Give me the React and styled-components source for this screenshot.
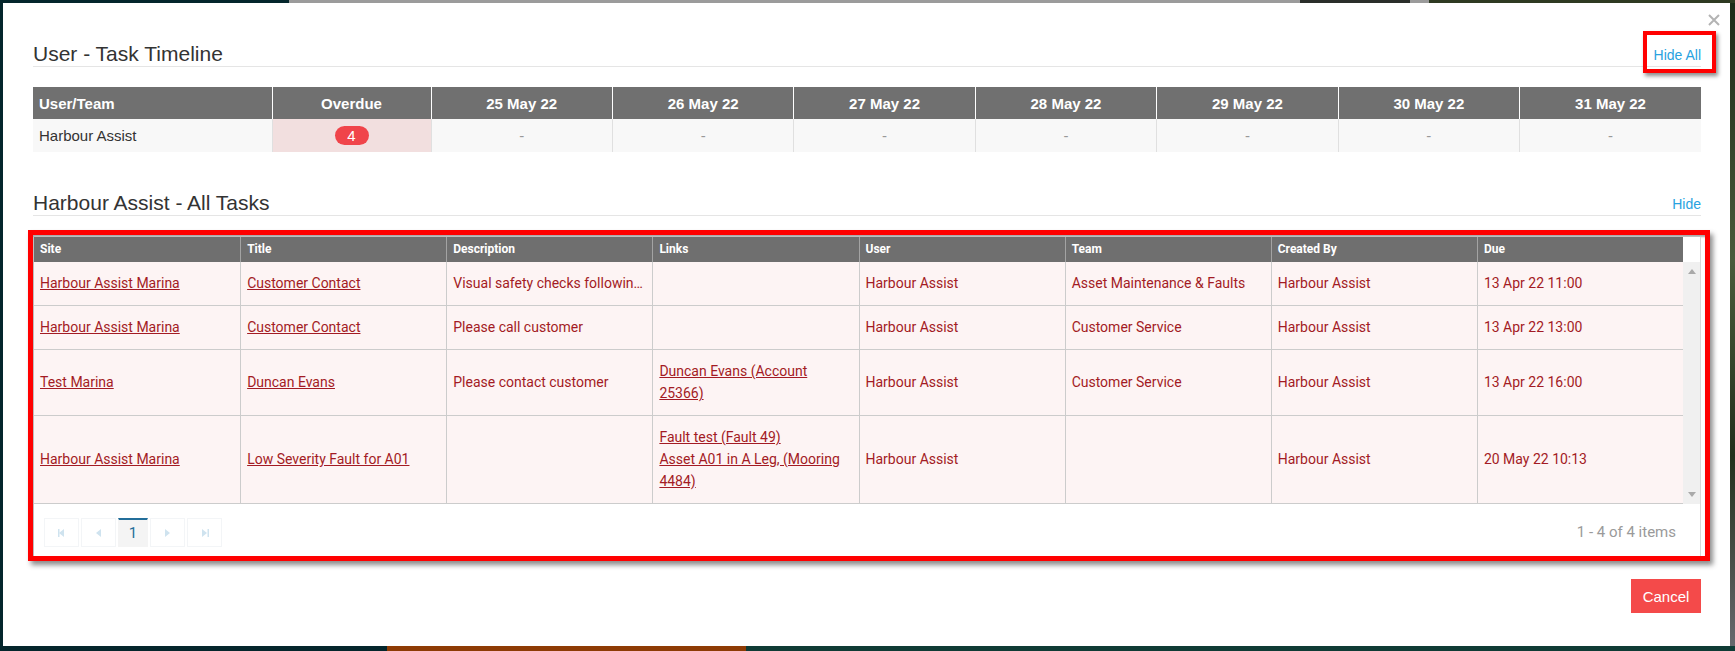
import React from "react";
import styled, { createGlobalStyle, css } from "styled-components";

const GlobalStyle = createGlobalStyle`
  html, body { margin: 0; padding: 0; }
  body { font-family: "Liberation Sans", Arial, sans-serif; }
  *, *::before, *::after { box-sizing: border-box; }
`;

const Page = styled.div`
  width: 1735px;
  height: 651px;
  padding: 3px 5px 5px 3px;
  display: flex;
  background:
    linear-gradient(to right, #04262c 0 289px, #9b9b9b 289px 1300px, #2a2f2a 1300px 1410px, #9b9b9b 1410px 1429px, #2f3a22 1429px) top / 100% 3px no-repeat,
    linear-gradient(to right, #04262c 0 387px, #8e3b05 387px 746px, #0f3b35 746px) bottom / 100% 5px no-repeat,
    linear-gradient(#1b2a18, #4a5a3a 40%, #22301c 70%, #6a6a70) right / 5px 100% no-repeat,
    #04262c;
`;

const Modal = styled.div`
  position: relative;
  width: 1727px;
  height: 643px;
  background: #fff;
  padding: 39px 29px 0 30px;
  display: flex;
  flex-direction: column;
`;

const CloseButton = styled.button`
  position: absolute;
  top: 11px;
  right: 10px;
  width: 12px;
  height: 12px;
  padding: 0;
  border: 0;
  background: transparent;
  display: flex;
  cursor: pointer;
`;

const Section = styled.section`
  display: flex;
  flex-direction: column;
  margin-top: ${(p) => p.$gap || 0}px;
`;

const SectionHeader = styled.div`
  height: 25px;
  display: flex;
  align-items: center;
  justify-content: space-between;
  border-bottom: 1px solid #e5e5e5;
`;

const SectionTitle = styled.h2`
  margin: 0;
  font-family: "Liberation Sans", Arial, sans-serif;
  font-weight: normal;
  font-size: 21px;
  line-height: 24px;
  color: #333;
`;

const LinkWrap = styled.span`
  position: relative;
  display: inline-flex;
  margin-top: 2px;
`;

const HeaderLink = styled.a`
  font-family: "Liberation Sans", Arial, sans-serif;
  font-size: 14px;
  line-height: 20px;
  color: #29a2e0;
  text-decoration: none;
  cursor: pointer;
`;

const Highlight = styled.span`
  position: absolute;
  left: -11px;
  right: -15px;
  top: -14px;
  bottom: -8px;
  border: 4px solid #ff0000;
  box-shadow: 2px 3px 4px rgba(0, 0, 0, 0.45);
  pointer-events: none;
`;

const TimelineTable = styled.table`
  margin-top: 20px;
  width: 1668px;
  table-layout: fixed;
  border-collapse: collapse;
  font-family: "Liberation Sans", Arial, sans-serif;
  font-size: 15px;
`;

const TH = styled.th`
  height: 32px;
  padding: 0 6px;
  background: #707070;
  color: #fff;
  font-weight: bold;
  text-align: ${(p) => (p.$left ? "left" : "center")};
  border-left: 1px solid #fff;
  &:first-child { border-left: 0; }
`;

const TD = styled.td`
  height: 33px;
  padding: 0 6px;
  background: ${(p) => (p.$overdue ? "#f2dfdf" : "#f8f8f8")};
  color: ${(p) => (p.$muted ? "#999" : "#333")};
  text-align: ${(p) => (p.$left ? "left" : "center")};
  border-left: 1px solid #e0e0e0;
  &:first-child { border-left: 0; }
`;

const Badge = styled.span`
  display: inline-block;
  min-width: 34px;
  height: 19px;
  line-height: 19px;
  border-radius: 10px;
  background: #f0444a;
  color: #fff;
  font-size: 15px;
  text-align: center;
`;

const HighlightFrame = styled.div`
  margin: 14px -9px 0 -5px;
  border: 5px solid #ff0000;
  box-shadow: 3px 4px 5px rgba(0, 0, 0, 0.45), inset 1px 2px 2px rgba(0, 0, 0, 0.35);
  padding-top: 2px;
  padding-right: 4px;
`;

const Grid = styled.div`
  width: 1668px;
  border-left: 1px solid #bdbdbd;
  border-right: 1px solid #d8d8d8;
  font-family: Roboto, "Liberation Sans", Arial, sans-serif;
  background: #fff;
`;

const cols = css`
  display: grid;
  grid-template-columns: repeat(8, minmax(0, 1fr));
`;

const GridHead = styled.div`
  display: grid;
  grid-template-columns: 1fr 17px;
`;

const HeadRow = styled.div`
  ${cols};
  background: #6f6f6f;
`;

const HeadCell = styled.div`
  height: 25px;
  line-height: 25px;
  padding: 0 6px;
  color: #fff;
  font-size: 12px;
  font-weight: 700;
  border-left: 1px solid #a3a3a3;
  &:first-child { border-left: 0; }
`;

const ScrollCorner = styled.div`
  background: #fff;
`;

const GridBody = styled.div`
  display: grid;
  grid-template-columns: 1fr 17px;
`;

const Rows = styled.div`
  display: flex;
  flex-direction: column;
`;

const Row = styled.div`
  ${cols};
  background: #fdf4f4;
  border-bottom: 1px solid #cccccc;
`;

const Cell = styled.div`
  min-width: 0;
  padding: 10px 6px 11px;
  display: flex;
  flex-direction: column;
  justify-content: center;
  font-size: 14px;
  line-height: 22px;
  color: #a31b24;
  border-left: 1px solid #cccccc;
  &:first-child { border-left: 0; }
`;

const Ellipsis = styled.span`
  white-space: nowrap;
  overflow: hidden;
  text-overflow: ellipsis;
`;

const CellLink = styled.a`
  color: #a31b24;
  text-decoration: underline;
  cursor: pointer;
`;

const Scrollbar = styled.div`
  background: #f0f0f0;
  display: flex;
  flex-direction: column;
  justify-content: space-between;
  align-items: center;
  padding: 7px 0 7px;
`;

const Pager = styled.div`
  height: 52px;
  padding: 14px 24px 0 10px;
  display: flex;
  align-items: flex-start;
  justify-content: space-between;
`;

const PagerButtons = styled.div`
  display: flex;
  gap: 2px;
`;

const PagerButton = styled.button`
  width: ${(p) => (p.$active ? 30 : 35)}px;
  height: 29px;
  padding: 0;
  display: flex;
  align-items: center;
  justify-content: center;
  background: ${(p) => (p.$active ? "#f4f4f4" : "#fff")};
  border: 1px solid ${(p) => (p.$active ? "#f4f4f4" : "#f3f5f7")};
  border-top: ${(p) => (p.$active ? "2px solid #236e9a" : "1px solid #f3f5f7")};
  color: #236e9a;
  font-family: Roboto, "Liberation Sans", sans-serif;
  font-size: 15px;
  cursor: pointer;
`;

const PagerInfo = styled.span`
  font-size: 15px;
  line-height: 29px;
  color: #9a9a9a;
`;

const Footer = styled.div`
  margin-top: 18px;
  display: flex;
  justify-content: flex-end;
`;

const CancelButton = styled.button`
  width: 70px;
  height: 34px;
  padding: 0;
  border: 0;
  background: #f44a4a;
  color: #fff;
  font-family: "Liberation Sans", Arial, sans-serif;
  font-size: 15px;
  cursor: pointer;
`;

const Tri = ({ dir, color = "#cfe3ef", bar }) => {
  const vertical = dir === "up" || dir === "down";
  const pts =
    dir === "up" ? "0,5 4,0 8,5" : dir === "down" ? "0,0 4,5 8,0" : dir === "left" ? "6,0 6,8 1,4" : "1,0 1,8 6,4";
  return (
    <svg width="8" height={vertical ? 5 : 8} viewBox={vertical ? "0 0 8 5" : "0 0 8 8"}>
      <polygon points={pts} fill={color} />
      {bar === "left" && <rect x="0" y="0" width="1.5" height="8" fill={color} />}
      {bar === "right" && <rect x="6.5" y="0" width="1.5" height="8" fill={color} />}
    </svg>
  );
};

const dates = ["25 May 22", "26 May 22", "27 May 22", "28 May 22", "29 May 22", "30 May 22", "31 May 22"];

const columns = ["Site", "Title", "Description", "Links", "User", "Team", "Created By", "Due"];

const tasks = [
  {
    site: "Harbour Assist Marina",
    title: "Customer Contact",
    desc: "Visual safety checks following storm damage",
    links: [],
    user: "Harbour Assist",
    team: "Asset Maintenance & Faults",
    createdBy: "Harbour Assist",
    due: "13 Apr 22 11:00",
  },
  {
    site: "Harbour Assist Marina",
    title: "Customer Contact",
    desc: "Please call customer",
    links: [],
    user: "Harbour Assist",
    team: "Customer Service",
    createdBy: "Harbour Assist",
    due: "13 Apr 22 13:00",
  },
  {
    site: "Test Marina",
    title: "Duncan Evans",
    desc: "Please contact customer",
    links: [["Duncan Evans (Account", "25366)"]],
    user: "Harbour Assist",
    team: "Customer Service",
    createdBy: "Harbour Assist",
    due: "13 Apr 22 16:00",
  },
  {
    site: "Harbour Assist Marina",
    title: "Low Severity Fault for A01",
    desc: "",
    links: [["Fault test (Fault 49)"], ["Asset A01 in A Leg, (Mooring", "4484)"]],
    user: "Harbour Assist",
    team: "",
    createdBy: "Harbour Assist",
    due: "20 May 22 10:13",
  },
];

export default function App() {
  return (
    <>
      <GlobalStyle />
      <Page>
        <Modal>
          <CloseButton aria-label="Close">
            <svg width="12" height="12" viewBox="0 0 12 12">
              <path d="M1 1 L11 11 M11 1 L1 11" stroke="#b3b3b3" strokeWidth="2" />
            </svg>
          </CloseButton>

          <Section>
            <SectionHeader>
              <SectionTitle>User - Task Timeline</SectionTitle>
              <LinkWrap>
                <HeaderLink>Hide All</HeaderLink>
                <Highlight />
              </LinkWrap>
            </SectionHeader>
            <TimelineTable>
              <colgroup>
                <col style={{ width: 239 }} />
                <col style={{ width: 159 }} />
                {dates.map((d) => (
                  <col key={d} />
                ))}
              </colgroup>
              <thead>
                <tr>
                  <TH $left>User/Team</TH>
                  <TH>Overdue</TH>
                  {dates.map((d) => (
                    <TH key={d}>{d}</TH>
                  ))}
                </tr>
              </thead>
              <tbody>
                <tr>
                  <TD $left>Harbour Assist</TD>
                  <TD $overdue>
                    <Badge>4</Badge>
                  </TD>
                  {dates.map((d) => (
                    <TD key={d} $muted>
                      -
                    </TD>
                  ))}
                </tr>
              </tbody>
            </TimelineTable>
          </Section>

          <Section $gap={39}>
            <SectionHeader>
              <SectionTitle>Harbour Assist - All Tasks</SectionTitle>
              <LinkWrap>
                <HeaderLink>Hide</HeaderLink>
              </LinkWrap>
            </SectionHeader>
            <HighlightFrame>
              <Grid>
                <GridHead>
                  <HeadRow>
                    {columns.map((c) => (
                      <HeadCell key={c}>{c}</HeadCell>
                    ))}
                  </HeadRow>
                  <ScrollCorner />
                </GridHead>
                <GridBody>
                  <Rows>
                    {tasks.map((t, i) => (
                      <Row key={i}>
                        <Cell>
                          <span>
                            <CellLink>{t.site}</CellLink>
                          </span>
                        </Cell>
                        <Cell>
                          <span>
                            <CellLink>{t.title}</CellLink>
                          </span>
                        </Cell>
                        <Cell>
                          <Ellipsis>{t.desc}</Ellipsis>
                        </Cell>
                        <Cell>
                          {t.links.map((l, j) => (
                            <span key={j}>
                              <CellLink>
                                {l.map((line, k) => (
                                  <React.Fragment key={k}>
                                    {k > 0 && <br />}
                                    {line}
                                  </React.Fragment>
                                ))}
                              </CellLink>
                            </span>
                          ))}
                        </Cell>
                        <Cell>{t.user}</Cell>
                        <Cell>{t.team}</Cell>
                        <Cell>{t.createdBy}</Cell>
                        <Cell>{t.due}</Cell>
                      </Row>
                    ))}
                  </Rows>
                  <Scrollbar>
                    <Tri dir="up" color="#a9a9a9" />
                    <Tri dir="down" color="#a9a9a9" />
                  </Scrollbar>
                </GridBody>
                <Pager>
                  <PagerButtons>
                    <PagerButton aria-label="First page">
                      <Tri dir="left" bar="left" />
                    </PagerButton>
                    <PagerButton aria-label="Previous page">
                      <Tri dir="left" />
                    </PagerButton>
                    <PagerButton $active>1</PagerButton>
                    <PagerButton aria-label="Next page">
                      <Tri dir="right" />
                    </PagerButton>
                    <PagerButton aria-label="Last page">
                      <Tri dir="right" bar="right" />
                    </PagerButton>
                  </PagerButtons>
                  <PagerInfo>1 - 4 of 4 items</PagerInfo>
                </Pager>
              </Grid>
            </HighlightFrame>
          </Section>

          <Footer>
            <CancelButton>Cancel</CancelButton>
          </Footer>
        </Modal>
      </Page>
    </>
  );
}
